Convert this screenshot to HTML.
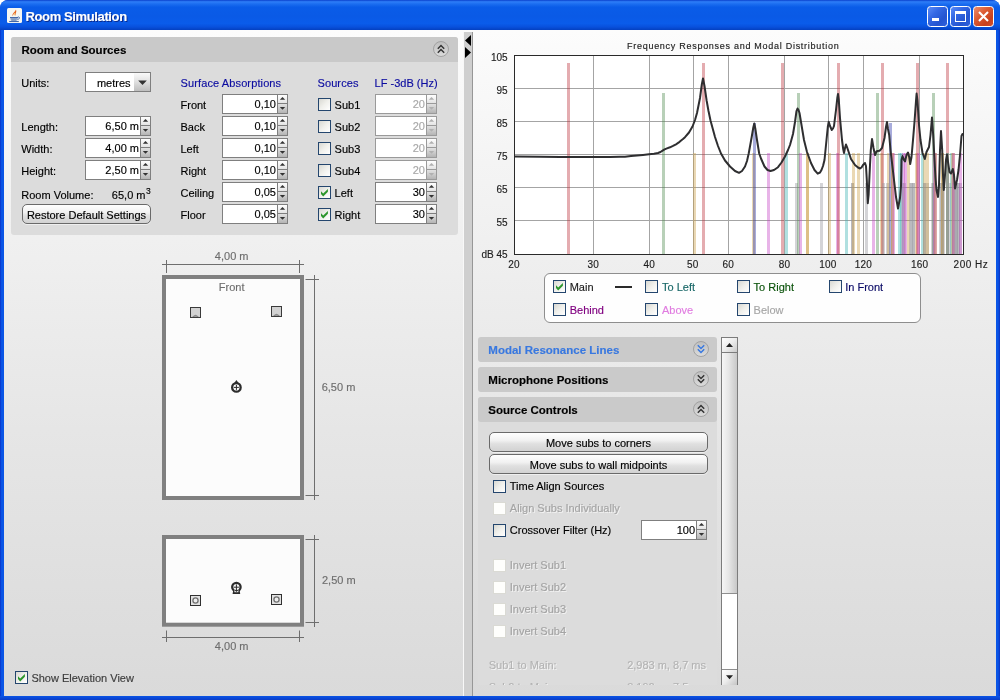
<!DOCTYPE html><html><head><meta charset="utf-8"><title>Room Simulation</title><style>
html,body{margin:0;padding:0;}body{width:1000px;height:700px;overflow:hidden;position:relative;background:#FFFFFF;font-family:"Liberation Sans", sans-serif;font-size:11px;}
div,svg{box-sizing:content-box;}div{-webkit-text-stroke:0.15px;}
</style></head><body><div style="position:absolute;left:0;top:0;width:1000px;height:700px;will-change:transform;">
<div style="position:absolute;left:0;top:0;width:1000px;height:700px;border-radius:8px 8px 0 0;overflow:hidden;background:#0A50DC;">
<div style="position:absolute;left:0;top:0;width:1000px;height:30px;background:linear-gradient(180deg,#0A40CC 0%,#2E7EF8 6%,#1C6EF0 13%,#0A5CE8 24%,#0A5AE6 55%,#0A5CEA 78%,#0850DC 90%,#0440C0 100%);"></div>
<div style="position:absolute;left:0;top:30px;width:4px;height:670px;background:linear-gradient(90deg,#0A30C8,#0A55E6 40%,#0A55E6);"></div>
<div style="position:absolute;left:996px;top:30px;width:4px;height:670px;background:linear-gradient(90deg,#0A55E6,#0A55E6 50%,#0A30C0);"></div>
<div style="position:absolute;left:0;top:696px;width:1000px;height:4px;background:linear-gradient(#0A55E6,#0A3CC8);"></div>
<div style="position:absolute;left:4px;top:30px;width:992px;height:666px;background:linear-gradient(180deg,#FCFCFC 0%,#F4F4F4 20%,#E6E6E6 60%,#DADADA 100%);"></div>
</div>
<svg style="position:absolute;left:7px;top:8px" width="15" height="15" viewBox="0 0 15 15"><rect x="0" y="0" width="15" height="15" rx="1.5" fill="#F6F6F2"/><path d="M6 8.3 C4.4 6.2 7.4 4.6 8.9 1.8 C10.2 4 7.9 5.4 8.7 7.8 C7.5 6.8 7.4 5.8 8 4.7 C6.6 5.7 5.9 6.9 6 8.3Z" fill="#E8641C"/><path d="M7 7.2 C6.8 6.2 7.6 5.4 8.2 4.4 C8 5.6 7.4 6.2 7.6 7.6Z" fill="#F8C848"/><path d="M3 9.5 H11 M3.4 10.9 H10.6 M4.2 12.1 H9.6" stroke="#4468A8" stroke-width="1" fill="none"/><path d="M2.2 13.5 H11.8" stroke="#4468A8" stroke-width="1.1" fill="none"/><path d="M10.8 9 C13.2 8.4 13.2 11.2 10.4 11.4" stroke="#4468A8" stroke-width="0.9" fill="none"/></svg>
<div style="position:absolute;top:9.40px;line-height:16px;font-size:13px;color:#fff;white-space:pre;font-weight:bold;letter-spacing:-0.38px;left:25.50px;text-shadow:1px 1px 0 #0A2A8C;">Room Simulation</div>
<div style="position:absolute;left:927px;top:6px;width:19px;height:19px;border:1px solid #fff;border-radius:3.5px;background:linear-gradient(135deg,#5C8CF8 0%,#3468E4 35%,#2454D0 70%,#3060DC 100%);"></div>
<div style="position:absolute;left:932px;top:18px;width:7px;height:3px;background:#fff;"></div>
<div style="position:absolute;left:950px;top:6px;width:19px;height:19px;border:1px solid #fff;border-radius:3.5px;background:linear-gradient(135deg,#5C8CF8 0%,#3468E4 35%,#2454D0 70%,#3060DC 100%);"></div>
<div style="position:absolute;left:955px;top:11px;width:9px;height:7px;border:1px solid #fff;border-top:3px solid #fff;"></div>
<div style="position:absolute;left:973px;top:6px;width:19px;height:19px;border:1px solid #fff;border-radius:3.5px;background:linear-gradient(135deg,#EC8E6E 0%,#DC5A32 40%,#C8401C 75%,#D25030 100%);"></div>
<svg style="position:absolute;left:973px;top:6px" width="21" height="21" viewBox="0 0 21 21"><path d="M6 6 L15 15 M15 6 L6 15" stroke="#fff" stroke-width="2.1" stroke-linecap="butt"/></svg>
<div style="position:absolute;left:11px;top:37px;width:447px;height:198px;background:#DCDCDC;border-radius:3px;"></div>
<div style="position:absolute;left:11px;top:37px;width:447px;height:25px;background:#C9C9C9;border-radius:3px 3px 0 0;"></div>
<div style="position:absolute;top:41.72px;line-height:16px;font-size:11.5px;color:#000;white-space:pre;font-weight:bold;left:21.50px;">Room and Sources</div>
<svg style="position:absolute;left:431px;top:38.8px" width="20" height="20" viewBox="-10 -10 20 20"><defs><linearGradient id="cg441_48" x1="0" y1="0" x2="0" y2="1"><stop offset="0" stop-color="#BEBEBE"/><stop offset="1" stop-color="#DCDCDC"/></linearGradient></defs><circle cx="0" cy="0" r="7.5" fill="url(#cg441_48)" stroke="#A2A2A2" stroke-width="1"/><path d="M-3.2 -0.3 L0 -3.5 L3.2 -0.3 M-3.2 3.7 L0 0.5 L3.2 3.7" fill="none" stroke="#333" stroke-width="1.5"/></svg>
<div style="position:absolute;top:75.19px;line-height:16px;font-size:11px;color:#000;white-space:pre;left:21.30px;">Units:</div>
<div style="position:absolute;left:85px;top:72px;width:64px;height:18px;border:1px solid #7F7F7F;background:#fff;"></div>
<div style="position:absolute;left:134px;top:73px;width:16px;height:18px;background:linear-gradient(#FAFAFA,#E6E6E6 40%,#BEBEBE);"></div>
<svg style="position:absolute;left:134px;top:73px" width="16" height="18" viewBox="0 0 16 18"><path d="M4.2 7.4 L12.8 7.4 L8.5 12 Z" fill="#333"/></svg>
<div style="position:absolute;top:74.59px;line-height:16px;font-size:11px;color:#000;white-space:pre;right:869.50px;">metres</div>
<div style="position:absolute;top:118.79px;line-height:16px;font-size:11px;color:#000;white-space:pre;left:21.30px;">Length:</div>
<div style="position:absolute;left:85px;top:116px;width:64px;height:18px;border:1px solid #7F7F7F;background:#fff;"></div>
<div style="position:absolute;left:140px;top:116px;width:9px;height:8px;border:1px solid #7F7F7F;background:linear-gradient(#FFFFFF,#E4E4E4);"></div>
<div style="position:absolute;left:140px;top:125px;width:9px;height:9px;border:1px solid #7F7F7F;background:linear-gradient(#E2E2E2,#B4B4B4);"></div>
<svg style="position:absolute;left:140px;top:116px" width="11" height="20" viewBox="0 0 11 20"><path d="M5.5 2.9 L8.2 5.8 L2.8 5.8 Z" fill="#333"/><path d="M2.8 12.9 L8.2 12.9 L5.5 15.8 Z" fill="#333"/></svg>
<div style="position:absolute;top:118.49px;line-height:16px;font-size:11px;color:#000;white-space:pre;right:861.00px;">6,50 m</div>
<div style="position:absolute;top:140.79px;line-height:16px;font-size:11px;color:#000;white-space:pre;left:21.30px;">Width:</div>
<div style="position:absolute;left:85px;top:138px;width:64px;height:18px;border:1px solid #7F7F7F;background:#fff;"></div>
<div style="position:absolute;left:140px;top:138px;width:9px;height:8px;border:1px solid #7F7F7F;background:linear-gradient(#FFFFFF,#E4E4E4);"></div>
<div style="position:absolute;left:140px;top:147px;width:9px;height:9px;border:1px solid #7F7F7F;background:linear-gradient(#E2E2E2,#B4B4B4);"></div>
<svg style="position:absolute;left:140px;top:138px" width="11" height="20" viewBox="0 0 11 20"><path d="M5.5 2.9 L8.2 5.8 L2.8 5.8 Z" fill="#333"/><path d="M2.8 12.9 L8.2 12.9 L5.5 15.8 Z" fill="#333"/></svg>
<div style="position:absolute;top:140.49px;line-height:16px;font-size:11px;color:#000;white-space:pre;right:861.00px;">4,00 m</div>
<div style="position:absolute;top:162.79px;line-height:16px;font-size:11px;color:#000;white-space:pre;left:21.30px;">Height:</div>
<div style="position:absolute;left:85px;top:160px;width:64px;height:18px;border:1px solid #7F7F7F;background:#fff;"></div>
<div style="position:absolute;left:140px;top:160px;width:9px;height:8px;border:1px solid #7F7F7F;background:linear-gradient(#FFFFFF,#E4E4E4);"></div>
<div style="position:absolute;left:140px;top:169px;width:9px;height:9px;border:1px solid #7F7F7F;background:linear-gradient(#E2E2E2,#B4B4B4);"></div>
<svg style="position:absolute;left:140px;top:160px" width="11" height="20" viewBox="0 0 11 20"><path d="M5.5 2.9 L8.2 5.8 L2.8 5.8 Z" fill="#333"/><path d="M2.8 12.9 L8.2 12.9 L5.5 15.8 Z" fill="#333"/></svg>
<div style="position:absolute;top:162.49px;line-height:16px;font-size:11px;color:#000;white-space:pre;right:861.00px;">2,50 m</div>
<div style="position:absolute;top:186.79px;line-height:16px;font-size:11px;color:#000;white-space:pre;left:21.30px;">Room Volume:</div>
<div style="position:absolute;top:186.79px;line-height:16px;font-size:11px;color:#000;white-space:pre;right:854.50px;">65,0 m</div>
<div style="position:absolute;top:182.55px;line-height:16px;font-size:8.5px;color:#000;white-space:pre;left:146.00px;">3</div>
<div style="position:absolute;left:22px;top:204px;width:127px;height:18px;border:1px solid #6A6A6A;border-radius:5px;background:linear-gradient(#FEFEFE 0%,#F2F2F2 40%,#E0E0E0 60%,#D2D2D2 100%);box-shadow:0 1px 0 rgba(255,255,255,.55);"></div>
<div style="position:absolute;top:206.69px;line-height:16px;font-size:11px;color:#000;white-space:pre;left:-113.50px;width:400px;text-align:center;">Restore Default Settings</div>
<div style="position:absolute;top:74.99px;line-height:16px;font-size:11px;color:#0C0CA0;white-space:pre;letter-spacing:0.12px;left:180.50px;">Surface Absorptions</div>
<div style="position:absolute;top:96.69px;line-height:16px;font-size:11px;color:#000;white-space:pre;left:180.50px;">Front</div>
<div style="position:absolute;left:222px;top:94px;width:64px;height:18px;border:1px solid #7F7F7F;background:#fff;"></div>
<div style="position:absolute;left:277px;top:94px;width:9px;height:8px;border:1px solid #7F7F7F;background:linear-gradient(#FFFFFF,#E4E4E4);"></div>
<div style="position:absolute;left:277px;top:103px;width:9px;height:9px;border:1px solid #7F7F7F;background:linear-gradient(#E2E2E2,#B4B4B4);"></div>
<svg style="position:absolute;left:277px;top:94px" width="11" height="20" viewBox="0 0 11 20"><path d="M5.5 2.9 L8.2 5.8 L2.8 5.8 Z" fill="#333"/><path d="M2.8 12.9 L8.2 12.9 L5.5 15.8 Z" fill="#333"/></svg>
<div style="position:absolute;top:96.49px;line-height:16px;font-size:11px;color:#000;white-space:pre;right:724.00px;">0,10</div>
<div style="position:absolute;top:118.69px;line-height:16px;font-size:11px;color:#000;white-space:pre;left:180.50px;">Back</div>
<div style="position:absolute;left:222px;top:116px;width:64px;height:18px;border:1px solid #7F7F7F;background:#fff;"></div>
<div style="position:absolute;left:277px;top:116px;width:9px;height:8px;border:1px solid #7F7F7F;background:linear-gradient(#FFFFFF,#E4E4E4);"></div>
<div style="position:absolute;left:277px;top:125px;width:9px;height:9px;border:1px solid #7F7F7F;background:linear-gradient(#E2E2E2,#B4B4B4);"></div>
<svg style="position:absolute;left:277px;top:116px" width="11" height="20" viewBox="0 0 11 20"><path d="M5.5 2.9 L8.2 5.8 L2.8 5.8 Z" fill="#333"/><path d="M2.8 12.9 L8.2 12.9 L5.5 15.8 Z" fill="#333"/></svg>
<div style="position:absolute;top:118.49px;line-height:16px;font-size:11px;color:#000;white-space:pre;right:724.00px;">0,10</div>
<div style="position:absolute;top:140.69px;line-height:16px;font-size:11px;color:#000;white-space:pre;left:180.50px;">Left</div>
<div style="position:absolute;left:222px;top:138px;width:64px;height:18px;border:1px solid #7F7F7F;background:#fff;"></div>
<div style="position:absolute;left:277px;top:138px;width:9px;height:8px;border:1px solid #7F7F7F;background:linear-gradient(#FFFFFF,#E4E4E4);"></div>
<div style="position:absolute;left:277px;top:147px;width:9px;height:9px;border:1px solid #7F7F7F;background:linear-gradient(#E2E2E2,#B4B4B4);"></div>
<svg style="position:absolute;left:277px;top:138px" width="11" height="20" viewBox="0 0 11 20"><path d="M5.5 2.9 L8.2 5.8 L2.8 5.8 Z" fill="#333"/><path d="M2.8 12.9 L8.2 12.9 L5.5 15.8 Z" fill="#333"/></svg>
<div style="position:absolute;top:140.49px;line-height:16px;font-size:11px;color:#000;white-space:pre;right:724.00px;">0,10</div>
<div style="position:absolute;top:162.69px;line-height:16px;font-size:11px;color:#000;white-space:pre;left:180.50px;">Right</div>
<div style="position:absolute;left:222px;top:160px;width:64px;height:18px;border:1px solid #7F7F7F;background:#fff;"></div>
<div style="position:absolute;left:277px;top:160px;width:9px;height:8px;border:1px solid #7F7F7F;background:linear-gradient(#FFFFFF,#E4E4E4);"></div>
<div style="position:absolute;left:277px;top:169px;width:9px;height:9px;border:1px solid #7F7F7F;background:linear-gradient(#E2E2E2,#B4B4B4);"></div>
<svg style="position:absolute;left:277px;top:160px" width="11" height="20" viewBox="0 0 11 20"><path d="M5.5 2.9 L8.2 5.8 L2.8 5.8 Z" fill="#333"/><path d="M2.8 12.9 L8.2 12.9 L5.5 15.8 Z" fill="#333"/></svg>
<div style="position:absolute;top:162.49px;line-height:16px;font-size:11px;color:#000;white-space:pre;right:724.00px;">0,10</div>
<div style="position:absolute;top:184.69px;line-height:16px;font-size:11px;color:#000;white-space:pre;left:180.50px;">Ceiling</div>
<div style="position:absolute;left:222px;top:182px;width:64px;height:18px;border:1px solid #7F7F7F;background:#fff;"></div>
<div style="position:absolute;left:277px;top:182px;width:9px;height:8px;border:1px solid #7F7F7F;background:linear-gradient(#FFFFFF,#E4E4E4);"></div>
<div style="position:absolute;left:277px;top:191px;width:9px;height:9px;border:1px solid #7F7F7F;background:linear-gradient(#E2E2E2,#B4B4B4);"></div>
<svg style="position:absolute;left:277px;top:182px" width="11" height="20" viewBox="0 0 11 20"><path d="M5.5 2.9 L8.2 5.8 L2.8 5.8 Z" fill="#333"/><path d="M2.8 12.9 L8.2 12.9 L5.5 15.8 Z" fill="#333"/></svg>
<div style="position:absolute;top:184.49px;line-height:16px;font-size:11px;color:#000;white-space:pre;right:724.00px;">0,05</div>
<div style="position:absolute;top:206.69px;line-height:16px;font-size:11px;color:#000;white-space:pre;left:180.50px;">Floor</div>
<div style="position:absolute;left:222px;top:204px;width:64px;height:18px;border:1px solid #7F7F7F;background:#fff;"></div>
<div style="position:absolute;left:277px;top:204px;width:9px;height:8px;border:1px solid #7F7F7F;background:linear-gradient(#FFFFFF,#E4E4E4);"></div>
<div style="position:absolute;left:277px;top:213px;width:9px;height:9px;border:1px solid #7F7F7F;background:linear-gradient(#E2E2E2,#B4B4B4);"></div>
<svg style="position:absolute;left:277px;top:204px" width="11" height="20" viewBox="0 0 11 20"><path d="M5.5 2.9 L8.2 5.8 L2.8 5.8 Z" fill="#333"/><path d="M2.8 12.9 L8.2 12.9 L5.5 15.8 Z" fill="#333"/></svg>
<div style="position:absolute;top:206.49px;line-height:16px;font-size:11px;color:#000;white-space:pre;right:724.00px;">0,05</div>
<div style="position:absolute;top:74.99px;line-height:16px;font-size:11px;color:#0C0CA0;white-space:pre;letter-spacing:0.1px;left:317.50px;">Sources</div>
<div style="position:absolute;top:74.99px;line-height:16px;font-size:11px;color:#0C0CA0;white-space:pre;left:374.60px;">LF -3dB (Hz)</div>
<div style="position:absolute;left:318px;top:98px;width:11px;height:11px;border:1px solid #24466E;background:linear-gradient(135deg,#D8D8D2 0%,#F0F0EC 50%,#FFFFFF 100%);"></div>
<div style="position:absolute;top:96.69px;line-height:16px;font-size:11px;color:#000;white-space:pre;left:334.60px;">Sub1</div>
<div style="position:absolute;left:375px;top:94px;width:60px;height:18px;border:1px solid #9A9A9A;background:#fff;"></div>
<div style="position:absolute;left:426px;top:94px;width:9px;height:8px;border:1px solid #9A9A9A;background:linear-gradient(#FFFFFF,#E4E4E4);"></div>
<div style="position:absolute;left:426px;top:103px;width:9px;height:9px;border:1px solid #9A9A9A;background:linear-gradient(#E2E2E2,#B4B4B4);"></div>
<svg style="position:absolute;left:426px;top:94px" width="11" height="20" viewBox="0 0 11 20"><path d="M5.5 2.9 L8.2 5.8 L2.8 5.8 Z" fill="#B0B0B0"/><path d="M2.8 12.9 L8.2 12.9 L5.5 15.8 Z" fill="#B0B0B0"/></svg>
<div style="position:absolute;top:96.49px;line-height:16px;font-size:11px;color:#A8A8A8;white-space:pre;right:575.00px;">20</div>
<div style="position:absolute;left:318px;top:120px;width:11px;height:11px;border:1px solid #24466E;background:linear-gradient(135deg,#D8D8D2 0%,#F0F0EC 50%,#FFFFFF 100%);"></div>
<div style="position:absolute;top:118.69px;line-height:16px;font-size:11px;color:#000;white-space:pre;left:334.60px;">Sub2</div>
<div style="position:absolute;left:375px;top:116px;width:60px;height:18px;border:1px solid #9A9A9A;background:#fff;"></div>
<div style="position:absolute;left:426px;top:116px;width:9px;height:8px;border:1px solid #9A9A9A;background:linear-gradient(#FFFFFF,#E4E4E4);"></div>
<div style="position:absolute;left:426px;top:125px;width:9px;height:9px;border:1px solid #9A9A9A;background:linear-gradient(#E2E2E2,#B4B4B4);"></div>
<svg style="position:absolute;left:426px;top:116px" width="11" height="20" viewBox="0 0 11 20"><path d="M5.5 2.9 L8.2 5.8 L2.8 5.8 Z" fill="#B0B0B0"/><path d="M2.8 12.9 L8.2 12.9 L5.5 15.8 Z" fill="#B0B0B0"/></svg>
<div style="position:absolute;top:118.49px;line-height:16px;font-size:11px;color:#A8A8A8;white-space:pre;right:575.00px;">20</div>
<div style="position:absolute;left:318px;top:142px;width:11px;height:11px;border:1px solid #24466E;background:linear-gradient(135deg,#D8D8D2 0%,#F0F0EC 50%,#FFFFFF 100%);"></div>
<div style="position:absolute;top:140.69px;line-height:16px;font-size:11px;color:#000;white-space:pre;left:334.60px;">Sub3</div>
<div style="position:absolute;left:375px;top:138px;width:60px;height:18px;border:1px solid #9A9A9A;background:#fff;"></div>
<div style="position:absolute;left:426px;top:138px;width:9px;height:8px;border:1px solid #9A9A9A;background:linear-gradient(#FFFFFF,#E4E4E4);"></div>
<div style="position:absolute;left:426px;top:147px;width:9px;height:9px;border:1px solid #9A9A9A;background:linear-gradient(#E2E2E2,#B4B4B4);"></div>
<svg style="position:absolute;left:426px;top:138px" width="11" height="20" viewBox="0 0 11 20"><path d="M5.5 2.9 L8.2 5.8 L2.8 5.8 Z" fill="#B0B0B0"/><path d="M2.8 12.9 L8.2 12.9 L5.5 15.8 Z" fill="#B0B0B0"/></svg>
<div style="position:absolute;top:140.49px;line-height:16px;font-size:11px;color:#A8A8A8;white-space:pre;right:575.00px;">20</div>
<div style="position:absolute;left:318px;top:164px;width:11px;height:11px;border:1px solid #24466E;background:linear-gradient(135deg,#D8D8D2 0%,#F0F0EC 50%,#FFFFFF 100%);"></div>
<div style="position:absolute;top:162.69px;line-height:16px;font-size:11px;color:#000;white-space:pre;left:334.60px;">Sub4</div>
<div style="position:absolute;left:375px;top:160px;width:60px;height:18px;border:1px solid #9A9A9A;background:#fff;"></div>
<div style="position:absolute;left:426px;top:160px;width:9px;height:8px;border:1px solid #9A9A9A;background:linear-gradient(#FFFFFF,#E4E4E4);"></div>
<div style="position:absolute;left:426px;top:169px;width:9px;height:9px;border:1px solid #9A9A9A;background:linear-gradient(#E2E2E2,#B4B4B4);"></div>
<svg style="position:absolute;left:426px;top:160px" width="11" height="20" viewBox="0 0 11 20"><path d="M5.5 2.9 L8.2 5.8 L2.8 5.8 Z" fill="#B0B0B0"/><path d="M2.8 12.9 L8.2 12.9 L5.5 15.8 Z" fill="#B0B0B0"/></svg>
<div style="position:absolute;top:162.49px;line-height:16px;font-size:11px;color:#A8A8A8;white-space:pre;right:575.00px;">20</div>
<div style="position:absolute;left:318px;top:186px;width:11px;height:11px;border:1px solid #24466E;background:linear-gradient(135deg,#D8D8D2 0%,#F0F0EC 50%,#FFFFFF 100%);"></div>
<svg style="position:absolute;left:318px;top:186px" width="13" height="13" viewBox="0 0 13 13"><path d="M3 5.2 L5.2 7.6 L9.9 2.9 L9.9 5.7 L5.2 10.4 L3 8 Z" fill="#2C962C"/></svg>
<div style="position:absolute;top:184.69px;line-height:16px;font-size:11px;color:#000;white-space:pre;left:334.60px;">Left</div>
<div style="position:absolute;left:375px;top:182px;width:60px;height:18px;border:1px solid #7F7F7F;background:#fff;"></div>
<div style="position:absolute;left:426px;top:182px;width:9px;height:8px;border:1px solid #7F7F7F;background:linear-gradient(#FFFFFF,#E4E4E4);"></div>
<div style="position:absolute;left:426px;top:191px;width:9px;height:9px;border:1px solid #7F7F7F;background:linear-gradient(#E2E2E2,#B4B4B4);"></div>
<svg style="position:absolute;left:426px;top:182px" width="11" height="20" viewBox="0 0 11 20"><path d="M5.5 2.9 L8.2 5.8 L2.8 5.8 Z" fill="#333"/><path d="M2.8 12.9 L8.2 12.9 L5.5 15.8 Z" fill="#333"/></svg>
<div style="position:absolute;top:184.49px;line-height:16px;font-size:11px;color:#000;white-space:pre;right:575.00px;">30</div>
<div style="position:absolute;left:318px;top:208px;width:11px;height:11px;border:1px solid #24466E;background:linear-gradient(135deg,#D8D8D2 0%,#F0F0EC 50%,#FFFFFF 100%);"></div>
<svg style="position:absolute;left:318px;top:208px" width="13" height="13" viewBox="0 0 13 13"><path d="M3 5.2 L5.2 7.6 L9.9 2.9 L9.9 5.7 L5.2 10.4 L3 8 Z" fill="#2C962C"/></svg>
<div style="position:absolute;top:206.69px;line-height:16px;font-size:11px;color:#000;white-space:pre;left:334.60px;">Right</div>
<div style="position:absolute;left:375px;top:204px;width:60px;height:18px;border:1px solid #7F7F7F;background:#fff;"></div>
<div style="position:absolute;left:426px;top:204px;width:9px;height:8px;border:1px solid #7F7F7F;background:linear-gradient(#FFFFFF,#E4E4E4);"></div>
<div style="position:absolute;left:426px;top:213px;width:9px;height:9px;border:1px solid #7F7F7F;background:linear-gradient(#E2E2E2,#B4B4B4);"></div>
<svg style="position:absolute;left:426px;top:204px" width="11" height="20" viewBox="0 0 11 20"><path d="M5.5 2.9 L8.2 5.8 L2.8 5.8 Z" fill="#333"/><path d="M2.8 12.9 L8.2 12.9 L5.5 15.8 Z" fill="#333"/></svg>
<div style="position:absolute;top:206.49px;line-height:16px;font-size:11px;color:#000;white-space:pre;right:575.00px;">30</div>
<div style="position:absolute;left:463px;top:32px;width:8px;height:664px;background:#CFCFCF;border-left:1px solid rgba(255,255,255,.85);border-right:1px solid #979797;"></div>
<svg style="position:absolute;left:464px;top:34px" width="9" height="26" viewBox="0 0 9 26"><path d="M7 1 L7 12 L1 6.5 Z M1 13 L1 24 L7 18.5 Z" fill="#000"/></svg>
<svg style="position:absolute;left:150px;top:245px" width="230" height="420" viewBox="150 245 230 420">
<rect x="164" y="277" width="138" height="221" fill="#FCFCFC" stroke="#808080" stroke-width="4"/>
<path d="M162 264.5 H304 M166.5 260 V273 M299.5 260 V273" stroke="#6E6E6E" stroke-width="1" fill="none"/>
<path d="M314.5 275 V500 M305.5 279.5 H319 M305.5 495.5 H319" stroke="#6E6E6E" stroke-width="1" fill="none"/>
<rect x="190.5" y="307.5" width="10" height="10" fill="#D2D2D2" stroke="#3A3A3A" stroke-width="1"/>
<path d="M192.5 316.8 Q195.5 313.8 198.5 316.8" fill="#8A8A8A" stroke="#6A6A6A" stroke-width="0.6"/>
<rect x="271.5" y="306.5" width="10" height="10" fill="#D2D2D2" stroke="#3A3A3A" stroke-width="1"/>
<path d="M273.5 315.8 Q276.5 312.8 279.5 315.8" fill="#8A8A8A" stroke="#6A6A6A" stroke-width="0.6"/>
<path d="M236.4 379.9 L238.9 383.4 L233.9 383.4 Z" fill="#2C2C2C"/>
<circle cx="236.4" cy="387.4" r="4.25" fill="#FAFAFA" stroke="#2C2C2C" stroke-width="2.3"/>
<path d="M236.4 384.9 V389.9 M233.9 387.4 H238.9" stroke="#2C2C2C" stroke-width="1"/>
<rect x="164" y="537" width="138" height="87.7" fill="#FCFCFC" stroke="#808080" stroke-width="4"/>
<path d="M314.5 535 V627 M305.5 539.5 H319 M305.5 622.5 H319" stroke="#6E6E6E" stroke-width="1" fill="none"/>
<path d="M162 637.5 H304 M166.5 630.5 V642 M299.5 630.5 V642" stroke="#6E6E6E" stroke-width="1" fill="none"/>
<rect x="190.5" y="595.5" width="10" height="10" fill="#E2E2E2" stroke="#303030" stroke-width="1"/>
<circle cx="195.5" cy="600.5" r="2.6" fill="#EDEDED" stroke="#707070" stroke-width="1.3"/>
<rect x="271.5" y="594.5" width="10" height="10" fill="#E2E2E2" stroke="#303030" stroke-width="1"/>
<circle cx="276.5" cy="599.5" r="2.6" fill="#EDEDED" stroke="#707070" stroke-width="1.3"/>
<path d="M232.6 594 L233.4 589 H239.4 L240.2 594 Z" fill="#2C2C2C"/>
<circle cx="236.4" cy="587" r="4.2" fill="#FAFAFA" stroke="#2C2C2C" stroke-width="2.3"/>
<rect x="234.4" y="589.6" width="4" height="2.6" fill="#FAFAFA"/>
<path d="M236.4 584.4 V591.8 M233.9 587.2 H238.9 M234.6 590.6 H238.2" stroke="#2C2C2C" stroke-width="1"/>
</svg>
<div style="position:absolute;top:247.59px;line-height:16px;font-size:11px;color:#6E6E6E;white-space:pre;left:31.70px;width:400px;text-align:center;">4,00 m</div>
<div style="position:absolute;top:279.19px;line-height:16px;font-size:11px;color:#6E6E6E;white-space:pre;left:31.70px;width:400px;text-align:center;">Front</div>
<div style="position:absolute;top:378.79px;line-height:16px;font-size:11px;color:#6E6E6E;white-space:pre;left:321.70px;">6,50 m</div>
<div style="position:absolute;top:571.79px;line-height:16px;font-size:11px;color:#6E6E6E;white-space:pre;left:322.00px;">2,50 m</div>
<div style="position:absolute;top:637.99px;line-height:16px;font-size:11px;color:#6E6E6E;white-space:pre;left:31.70px;width:400px;text-align:center;">4,00 m</div>
<div style="position:absolute;left:15px;top:671px;width:11px;height:11px;border:1px solid #24466E;background:linear-gradient(135deg,#D8D8D2 0%,#F0F0EC 50%,#FFFFFF 100%);"></div>
<svg style="position:absolute;left:15px;top:671px" width="13" height="13" viewBox="0 0 13 13"><path d="M3 5.2 L5.2 7.6 L9.9 2.9 L9.9 5.7 L5.2 10.4 L3 8 Z" fill="#2C962C"/></svg>
<div style="position:absolute;top:670.19px;line-height:16px;font-size:11px;color:#3C3C3C;white-space:pre;left:31.40px;">Show Elevation View</div>
<svg style="position:absolute;left:470px;top:30px" width="530" height="250" viewBox="470 30 530 250">
<rect x="514.5" y="55.5" width="449.0" height="199.0" fill="#FFFFFF"/>
<path d="M593.5 55.5 V254.5 M649.5 55.5 V254.5 M693.5 55.5 V254.5 M728.5 55.5 V254.5 M784.5 55.5 V254.5 M828.5 55.5 V254.5 M863.5 55.5 V254.5 M919.5 55.5 V254.5 M514.5 88.5 H963.5 M514.5 121.5 H963.5 M514.5 154.5 H963.5 M514.5 187.5 H963.5 M514.5 220.5 H963.5" stroke="#A4A4A4" stroke-width="1" fill="none"/>
<rect x="567" y="63" width="3" height="191" fill="rgba(188,48,58,0.4)"/>
<rect x="662" y="93" width="3" height="161" fill="rgba(78,138,78,0.4)"/>
<rect x="693" y="153" width="3" height="101" fill="rgba(202,157,67,0.4)"/>
<rect x="702" y="63" width="3" height="191" fill="rgba(188,48,58,0.4)"/>
<rect x="752" y="153" width="3" height="101" fill="rgba(202,157,67,0.4)"/>
<rect x="753" y="123" width="3" height="131" fill="rgba(38,48,168,0.4)"/>
<rect x="767" y="153" width="3" height="101" fill="rgba(198,68,198,0.4)"/>
<rect x="781" y="63" width="3" height="191" fill="rgba(188,48,58,0.4)"/>
<rect x="785" y="153" width="3" height="101" fill="rgba(58,178,178,0.4)"/>
<rect x="795" y="183" width="3" height="71" fill="rgba(148,148,156,0.4)"/>
<rect x="797" y="93" width="3" height="161" fill="rgba(78,138,78,0.4)"/>
<rect x="799" y="153" width="3" height="101" fill="rgba(198,68,198,0.4)"/>
<rect x="806" y="153" width="3" height="101" fill="rgba(202,157,67,0.4)"/>
<rect x="806" y="153" width="3" height="101" fill="rgba(202,157,67,0.4)"/>
<rect x="820" y="183" width="3" height="71" fill="rgba(148,148,156,0.4)"/>
<rect x="828" y="153" width="3" height="101" fill="rgba(202,157,67,0.4)"/>
<rect x="836" y="153" width="3" height="101" fill="rgba(198,68,198,0.4)"/>
<rect x="837" y="63" width="3" height="191" fill="rgba(188,48,58,0.4)"/>
<rect x="845" y="153" width="3" height="101" fill="rgba(58,178,178,0.4)"/>
<rect x="851" y="183" width="3" height="71" fill="rgba(148,148,156,0.4)"/>
<rect x="851" y="183" width="3" height="71" fill="rgba(148,148,156,0.4)"/>
<rect x="852" y="153" width="3" height="101" fill="rgba(202,157,67,0.4)"/>
<rect x="857" y="153" width="3" height="101" fill="rgba(202,157,67,0.4)"/>
<rect x="865" y="183" width="3" height="71" fill="rgba(148,148,156,0.4)"/>
<rect x="872" y="153" width="3" height="101" fill="rgba(198,68,198,0.4)"/>
<rect x="876" y="93" width="3" height="161" fill="rgba(78,138,78,0.4)"/>
<rect x="880" y="153" width="3" height="101" fill="rgba(202,157,67,0.4)"/>
<rect x="881" y="63" width="3" height="191" fill="rgba(188,48,58,0.4)"/>
<rect x="882" y="183" width="3" height="71" fill="rgba(148,148,156,0.4)"/>
<rect x="886" y="183" width="3" height="71" fill="rgba(148,148,156,0.4)"/>
<rect x="887" y="153" width="3" height="101" fill="rgba(202,157,67,0.4)"/>
<rect x="889" y="123" width="3" height="131" fill="rgba(38,48,168,0.4)"/>
<rect x="891" y="153" width="3" height="101" fill="rgba(202,157,67,0.4)"/>
<rect x="891" y="153" width="3" height="101" fill="rgba(202,157,67,0.4)"/>
<rect x="892" y="153" width="3" height="101" fill="rgba(198,68,198,0.4)"/>
<rect x="898" y="153" width="3" height="101" fill="rgba(58,178,178,0.4)"/>
<rect x="900" y="153" width="3" height="101" fill="rgba(58,178,178,0.4)"/>
<rect x="901" y="183" width="3" height="71" fill="rgba(148,148,156,0.4)"/>
<rect x="902" y="153" width="3" height="101" fill="rgba(198,68,198,0.4)"/>
<rect x="903" y="183" width="3" height="71" fill="rgba(148,148,156,0.4)"/>
<rect x="904" y="153" width="3" height="101" fill="rgba(198,68,198,0.4)"/>
<rect x="907" y="153" width="3" height="101" fill="rgba(202,157,67,0.4)"/>
<rect x="909" y="183" width="3" height="71" fill="rgba(148,148,156,0.4)"/>
<rect x="910" y="183" width="3" height="71" fill="rgba(148,148,156,0.4)"/>
<rect x="912" y="183" width="3" height="71" fill="rgba(148,148,156,0.4)"/>
<rect x="912" y="183" width="3" height="71" fill="rgba(148,148,156,0.4)"/>
<rect x="915" y="153" width="3" height="101" fill="rgba(202,157,67,0.4)"/>
<rect x="916" y="63" width="3" height="191" fill="rgba(188,48,58,0.4)"/>
<rect x="917" y="153" width="3" height="101" fill="rgba(198,68,198,0.4)"/>
<rect x="921" y="153" width="3" height="101" fill="rgba(58,178,178,0.4)"/>
<rect x="923" y="183" width="3" height="71" fill="rgba(148,148,156,0.4)"/>
<rect x="923" y="153" width="3" height="101" fill="rgba(202,157,67,0.4)"/>
<rect x="923" y="183" width="3" height="71" fill="rgba(148,148,156,0.4)"/>
<rect x="926" y="183" width="3" height="71" fill="rgba(148,148,156,0.4)"/>
<rect x="926" y="153" width="3" height="101" fill="rgba(202,157,67,0.4)"/>
<rect x="931" y="183" width="3" height="71" fill="rgba(148,148,156,0.4)"/>
<rect x="932" y="93" width="3" height="161" fill="rgba(78,138,78,0.4)"/>
<rect x="932" y="183" width="3" height="71" fill="rgba(148,148,156,0.4)"/>
<rect x="933" y="153" width="3" height="101" fill="rgba(198,68,198,0.4)"/>
<rect x="934" y="153" width="3" height="101" fill="rgba(198,68,198,0.4)"/>
<rect x="934" y="153" width="3" height="101" fill="rgba(202,157,67,0.4)"/>
<rect x="939" y="183" width="3" height="71" fill="rgba(148,148,156,0.4)"/>
<rect x="940" y="183" width="3" height="71" fill="rgba(148,148,156,0.4)"/>
<rect x="941" y="153" width="3" height="101" fill="rgba(202,157,67,0.4)"/>
<rect x="941" y="183" width="3" height="71" fill="rgba(148,148,156,0.4)"/>
<rect x="941" y="153" width="3" height="101" fill="rgba(202,157,67,0.4)"/>
<rect x="942" y="183" width="3" height="71" fill="rgba(148,148,156,0.4)"/>
<rect x="946" y="153" width="3" height="101" fill="rgba(202,157,67,0.4)"/>
<rect x="946" y="63" width="3" height="191" fill="rgba(188,48,58,0.4)"/>
<rect x="946" y="153" width="3" height="101" fill="rgba(58,178,178,0.4)"/>
<rect x="948" y="183" width="3" height="71" fill="rgba(148,148,156,0.4)"/>
<rect x="950" y="153" width="3" height="101" fill="rgba(58,178,178,0.4)"/>
<rect x="951" y="153" width="3" height="101" fill="rgba(202,157,67,0.4)"/>
<rect x="952" y="153" width="3" height="101" fill="rgba(202,157,67,0.4)"/>
<rect x="952" y="183" width="3" height="71" fill="rgba(148,148,156,0.4)"/>
<rect x="952" y="153" width="3" height="101" fill="rgba(198,68,198,0.4)"/>
<rect x="954" y="183" width="3" height="71" fill="rgba(148,148,156,0.4)"/>
<rect x="955" y="183" width="3" height="71" fill="rgba(148,148,156,0.4)"/>
<rect x="955" y="183" width="3" height="71" fill="rgba(148,148,156,0.4)"/>
<rect x="957" y="183" width="3" height="71" fill="rgba(148,148,156,0.4)"/>
<rect x="957" y="183" width="3" height="71" fill="rgba(148,148,156,0.4)"/>
<rect x="959" y="183" width="3" height="71" fill="rgba(148,148,156,0.4)"/>
<rect x="959" y="153" width="3" height="101" fill="rgba(198,68,198,0.4)"/>
<path d="M514.5 156.5 L540 156.7 L560 157 L590 157 L610 156.9 L620 156.8 L625 156.7 L631 156.1 L637 155.4 L643 154.9 L649 154.3 L654 153.7 L658 153 L660.5 152 L662.2 150.9 L664.6 149.4 L667 148.4 L670 147.3 L673 145.9 L676 144.3 L678.5 142.7 L680.8 140.7 L683 139 L685 137.2 L689 132.5 L692.5 126.5 L695 120 L697 113 L700 98 L701.8 84.5 L703 78.5 L704.5 86 L706.7 101 L708.5 111 L710.5 120.5 L715 137 L718 146 L721 153.5 L725 160.5 L730 166.5 L735 171 L739 172.8 L742 171 L745 166.5 L747 161 L748.7 153.5 L751.7 137 L753.3 127.5 L754.3 123.5 L755.3 128.5 L757 140 L759.2 153.5 L761 158.5 L764.5 166.5 L767.5 170 L770.5 171 L774 170 L778 167.2 L781.5 162.5 L785 156.5 L788 150 L790 145 L793 134 L795 122 L796.5 111 L797.5 108.5 L798.5 110 L799.5 113 L801.5 125 L804 140 L807 152 L811 163 L814.5 170 L817.7 173.7 L820 172.5 L821.5 170 L823 166 L824.5 160 L826.5 140 L827.8 127 L828.7 121.8 L830 126 L831.8 130 L833 128.5 L834 126 L836 110 L837.3 98 L838 94 L838.8 100 L840 118 L842 140 L843.2 149 L844 153 L845 148 L846 144.5 L847 147 L848 150 L851 159 L855 165 L858 167.5 L860 168.5 L861.5 167.5 L863 165 L865 163 L866 166 L866.8 180 L867.8 203.2 L868.6 195 L869.3 180 L870 165 L870.8 150 L872 139 L873.5 148 L875 155 L876.5 151.5 L877.5 151 L879.5 150.8 L882 148 L884.5 138 L886 127 L887 122 L888 129 L889.2 135 L890.5 150 L892.5 167 L894 180 L896 197 L898 208.5 L900 198 L901 186 L901.5 160 L902.5 156 L904 160 L905 161.5 L906.5 155 L908 152.5 L909.2 157 L910.2 164 L911.5 157 L913 140 L914.5 122 L916 101 L916.6 93.5 L917.4 100 L918.2 112 L919 125 L920.5 140 L922.5 153 L924.8 159 L926.5 152 L929 147 L930.5 135 L932 117.5 L933.2 135 L934.5 160 L935.5 178 L936.5 190 L938 197 L939 185 L940 150 L941 131 L942.2 150 L943 175 L943.8 190 L945 175 L946 160 L947 154.5 L948 162 L949.5 172 L951 173.5 L952.8 169 L954 175 L955 188.5 L957 180 L958.5 170 L960 155 L961.5 136 L962.5 134 L963.5 134" stroke="#2E2E30" stroke-width="2" fill="none" stroke-linejoin="round" stroke-linecap="butt"/>
<rect x="514.5" y="55.5" width="449.0" height="199.0" fill="none" stroke="#2A2A2A" stroke-width="1"/>
</svg>
<div style="position:absolute;top:37.78px;line-height:16px;font-size:9px;color:#1E1E1E;white-space:pre;letter-spacing:0.72px;left:533.20px;width:400px;text-align:center;">Frequency Responses and Modal Distribution</div>
<div style="position:absolute;top:49.64px;line-height:16px;font-size:10px;color:#1E1E1E;white-space:pre;right:492.40px;">105</div>
<div style="position:absolute;top:82.63px;line-height:16px;font-size:10px;color:#1E1E1E;white-space:pre;right:492.40px;">95</div>
<div style="position:absolute;top:115.63px;line-height:16px;font-size:10px;color:#1E1E1E;white-space:pre;right:492.40px;">85</div>
<div style="position:absolute;top:148.63px;line-height:16px;font-size:10px;color:#1E1E1E;white-space:pre;right:492.40px;">75</div>
<div style="position:absolute;top:181.63px;line-height:16px;font-size:10px;color:#1E1E1E;white-space:pre;right:492.40px;">65</div>
<div style="position:absolute;top:214.63px;line-height:16px;font-size:10px;color:#1E1E1E;white-space:pre;right:492.40px;">55</div>
<div style="position:absolute;top:246.53px;line-height:16px;font-size:10px;color:#1E1E1E;white-space:pre;right:492.40px;">dB 45</div>
<div style="position:absolute;top:256.74px;line-height:16px;font-size:10px;color:#1E1E1E;white-space:pre;letter-spacing:0.2px;left:314.10px;width:400px;text-align:center;">20</div>
<div style="position:absolute;top:256.74px;line-height:16px;font-size:10px;color:#1E1E1E;white-space:pre;letter-spacing:0.2px;left:393.16px;width:400px;text-align:center;">30</div>
<div style="position:absolute;top:256.74px;line-height:16px;font-size:10px;color:#1E1E1E;white-space:pre;letter-spacing:0.2px;left:449.26px;width:400px;text-align:center;">40</div>
<div style="position:absolute;top:256.74px;line-height:16px;font-size:10px;color:#1E1E1E;white-space:pre;letter-spacing:0.2px;left:492.78px;width:400px;text-align:center;">50</div>
<div style="position:absolute;top:256.74px;line-height:16px;font-size:10px;color:#1E1E1E;white-space:pre;letter-spacing:0.2px;left:528.33px;width:400px;text-align:center;">60</div>
<div style="position:absolute;top:256.74px;line-height:16px;font-size:10px;color:#1E1E1E;white-space:pre;letter-spacing:0.2px;left:584.42px;width:400px;text-align:center;">80</div>
<div style="position:absolute;top:256.74px;line-height:16px;font-size:10px;color:#1E1E1E;white-space:pre;letter-spacing:0.2px;left:627.94px;width:400px;text-align:center;">100</div>
<div style="position:absolute;top:256.74px;line-height:16px;font-size:10px;color:#1E1E1E;white-space:pre;letter-spacing:0.2px;left:663.49px;width:400px;text-align:center;">120</div>
<div style="position:absolute;top:256.74px;line-height:16px;font-size:10px;color:#1E1E1E;white-space:pre;letter-spacing:0.2px;left:719.59px;width:400px;text-align:center;">160</div>
<div style="position:absolute;top:256.74px;line-height:16px;font-size:10px;color:#1E1E1E;white-space:pre;letter-spacing:0.48px;left:953.60px;">200 Hz</div>
<div style="position:absolute;left:544px;top:273px;width:375px;height:48px;border:1px solid #8E8E8E;border-radius:6px;background:#FEFEFE;"></div>
<div style="position:absolute;left:553px;top:280px;width:11px;height:11px;border:1px solid #24466E;background:linear-gradient(135deg,#D8D8D2 0%,#F0F0EC 50%,#FFFFFF 100%);"></div>
<svg style="position:absolute;left:553px;top:280px" width="13" height="13" viewBox="0 0 13 13"><path d="M3 5.2 L5.2 7.6 L9.9 2.9 L9.9 5.7 L5.2 10.4 L3 8 Z" fill="#2C962C"/></svg>
<div style="position:absolute;top:278.69px;line-height:16px;font-size:11px;color:#222;white-space:pre;left:569.70px;">Main</div>
<div style="position:absolute;left:615px;top:286px;width:17px;height:2px;background:#2A2A2A;"></div>
<div style="position:absolute;left:645px;top:280px;width:11px;height:11px;border:1px solid #24466E;background:linear-gradient(135deg,#D8D8D2 0%,#F0F0EC 50%,#FFFFFF 100%);"></div>
<div style="position:absolute;top:278.69px;line-height:16px;font-size:11px;color:#1A6868;white-space:pre;left:662.00px;">To Left</div>
<div style="position:absolute;left:737px;top:280px;width:11px;height:11px;border:1px solid #24466E;background:linear-gradient(135deg,#D8D8D2 0%,#F0F0EC 50%,#FFFFFF 100%);"></div>
<div style="position:absolute;top:278.69px;line-height:16px;font-size:11px;color:#0A520A;white-space:pre;left:753.60px;">To Right</div>
<div style="position:absolute;left:829px;top:280px;width:11px;height:11px;border:1px solid #24466E;background:linear-gradient(135deg,#D8D8D2 0%,#F0F0EC 50%,#FFFFFF 100%);"></div>
<div style="position:absolute;top:278.69px;line-height:16px;font-size:11px;color:#0A0A66;white-space:pre;left:845.20px;">In Front</div>
<div style="position:absolute;left:553px;top:303px;width:11px;height:11px;border:1px solid #24466E;background:linear-gradient(135deg,#D8D8D2 0%,#F0F0EC 50%,#FFFFFF 100%);"></div>
<div style="position:absolute;top:301.69px;line-height:16px;font-size:11px;color:#800080;white-space:pre;left:569.70px;">Behind</div>
<div style="position:absolute;left:645px;top:303px;width:11px;height:11px;border:1px solid #24466E;background:linear-gradient(135deg,#D8D8D2 0%,#F0F0EC 50%,#FFFFFF 100%);"></div>
<div style="position:absolute;top:301.69px;line-height:16px;font-size:11px;color:#E07CE0;white-space:pre;left:662.00px;">Above</div>
<div style="position:absolute;left:737px;top:303px;width:11px;height:11px;border:1px solid #24466E;background:linear-gradient(135deg,#D8D8D2 0%,#F0F0EC 50%,#FFFFFF 100%);"></div>
<div style="position:absolute;top:301.69px;line-height:16px;font-size:11px;color:#A6A6A6;white-space:pre;left:753.60px;">Below</div>
<div style="position:absolute;left:478px;top:337px;width:239px;height:24.5px;background:#CACACA;border-radius:3px;"></div>
<div style="position:absolute;top:341.92px;line-height:16px;font-size:11.5px;color:#3878E0;white-space:pre;font-weight:bold;left:488.30px;">Modal Resonance Lines</div>
<svg style="position:absolute;left:691px;top:339px" width="20" height="20" viewBox="-10 -10 20 20"><defs><linearGradient id="cg701_349" x1="0" y1="0" x2="0" y2="1"><stop offset="0" stop-color="#BEBEBE"/><stop offset="1" stop-color="#DCDCDC"/></linearGradient></defs><circle cx="0" cy="0" r="7.5" fill="url(#cg701_349)" stroke="#A2A2A2" stroke-width="1"/><path d="M-3.2 -3.7 L0 -0.5 L3.2 -3.7 M-3.2 0.3 L0 3.5 L3.2 0.3" fill="none" stroke="#3878E0" stroke-width="1.5"/></svg>
<div style="position:absolute;left:478px;top:367px;width:239px;height:24.5px;background:#CACACA;border-radius:3px;"></div>
<div style="position:absolute;top:371.92px;line-height:16px;font-size:11.5px;color:#000;white-space:pre;font-weight:bold;left:488.30px;">Microphone Positions</div>
<svg style="position:absolute;left:691px;top:369px" width="20" height="20" viewBox="-10 -10 20 20"><defs><linearGradient id="cg701_379" x1="0" y1="0" x2="0" y2="1"><stop offset="0" stop-color="#BEBEBE"/><stop offset="1" stop-color="#DCDCDC"/></linearGradient></defs><circle cx="0" cy="0" r="7.5" fill="url(#cg701_379)" stroke="#A2A2A2" stroke-width="1"/><path d="M-3.2 -3.7 L0 -0.5 L3.2 -3.7 M-3.2 0.3 L0 3.5 L3.2 0.3" fill="none" stroke="#333" stroke-width="1.5"/></svg>
<div style="position:absolute;left:478px;top:397px;width:239px;height:288px;background:#DCDCDC;border-radius:3px 3px 0 0;"></div>
<div style="position:absolute;left:478px;top:397px;width:239px;height:24.5px;background:#CACACA;border-radius:3px;"></div>
<div style="position:absolute;top:401.92px;line-height:16px;font-size:11.5px;color:#000;white-space:pre;font-weight:bold;left:488.30px;">Source Controls</div>
<svg style="position:absolute;left:691px;top:399px" width="20" height="20" viewBox="-10 -10 20 20"><defs><linearGradient id="cg701_409" x1="0" y1="0" x2="0" y2="1"><stop offset="0" stop-color="#BEBEBE"/><stop offset="1" stop-color="#DCDCDC"/></linearGradient></defs><circle cx="0" cy="0" r="7.5" fill="url(#cg701_409)" stroke="#A2A2A2" stroke-width="1"/><path d="M-3.2 -0.3 L0 -3.5 L3.2 -0.3 M-3.2 3.7 L0 0.5 L3.2 3.7" fill="none" stroke="#333" stroke-width="1.5"/></svg>
<div style="position:absolute;left:489px;top:432px;width:217px;height:18px;border:1px solid #6A6A6A;border-radius:5px;background:linear-gradient(#FEFEFE 0%,#F2F2F2 40%,#E0E0E0 60%,#D2D2D2 100%);box-shadow:0 1px 0 rgba(255,255,255,.55);"></div>
<div style="position:absolute;top:434.69px;line-height:16px;font-size:11px;color:#000;white-space:pre;left:398.50px;width:400px;text-align:center;">Move subs to corners</div>
<div style="position:absolute;left:489px;top:454px;width:217px;height:18px;border:1px solid #6A6A6A;border-radius:5px;background:linear-gradient(#FEFEFE 0%,#F2F2F2 40%,#E0E0E0 60%,#D2D2D2 100%);box-shadow:0 1px 0 rgba(255,255,255,.55);"></div>
<div style="position:absolute;top:456.69px;line-height:16px;font-size:11px;color:#000;white-space:pre;left:398.50px;width:400px;text-align:center;">Move subs to wall midpoints</div>
<div style="position:absolute;left:493px;top:480px;width:11px;height:11px;border:1px solid #24466E;background:linear-gradient(135deg,#D8D8D2 0%,#F0F0EC 50%,#FFFFFF 100%);"></div>
<div style="position:absolute;top:478.39px;line-height:16px;font-size:11px;color:#000;white-space:pre;left:509.80px;">Time Align Sources</div>
<div style="position:absolute;left:493px;top:502px;width:11px;height:11px;border:1px solid #DADAD4;background:#FEFEFC;"></div>
<div style="position:absolute;top:500.39px;line-height:16px;font-size:11px;color:#A4A4A4;white-space:pre;left:509.80px;text-shadow:1px 1px 0 #F4F4F4;">Align Subs Individually</div>
<div style="position:absolute;left:493px;top:524px;width:11px;height:11px;border:1px solid #24466E;background:linear-gradient(135deg,#D8D8D2 0%,#F0F0EC 50%,#FFFFFF 100%);"></div>
<div style="position:absolute;top:522.39px;line-height:16px;font-size:11px;color:#000;white-space:pre;left:509.80px;">Crossover Filter (Hz)</div>
<div style="position:absolute;left:641px;top:520px;width:64px;height:18px;border:1px solid #7F7F7F;background:#fff;"></div>
<div style="position:absolute;left:696px;top:520px;width:9px;height:8px;border:1px solid #7F7F7F;background:linear-gradient(#FFFFFF,#E4E4E4);"></div>
<div style="position:absolute;left:696px;top:529px;width:9px;height:9px;border:1px solid #7F7F7F;background:linear-gradient(#E2E2E2,#B4B4B4);"></div>
<svg style="position:absolute;left:696px;top:520px" width="11" height="20" viewBox="0 0 11 20"><path d="M5.5 2.9 L8.2 5.8 L2.8 5.8 Z" fill="#333"/><path d="M2.8 12.9 L8.2 12.9 L5.5 15.8 Z" fill="#333"/></svg>
<div style="position:absolute;top:522.49px;line-height:16px;font-size:11px;color:#000;white-space:pre;right:305.00px;">100</div>
<div style="position:absolute;left:493px;top:559px;width:11px;height:11px;border:1px solid #DADAD4;background:#FEFEFC;"></div>
<div style="position:absolute;top:557.39px;line-height:16px;font-size:11px;color:#A4A4A4;white-space:pre;left:509.80px;text-shadow:1px 1px 0 #F4F4F4;">Invert Sub1</div>
<div style="position:absolute;left:493px;top:581px;width:11px;height:11px;border:1px solid #DADAD4;background:#FEFEFC;"></div>
<div style="position:absolute;top:579.39px;line-height:16px;font-size:11px;color:#A4A4A4;white-space:pre;left:509.80px;text-shadow:1px 1px 0 #F4F4F4;">Invert Sub2</div>
<div style="position:absolute;left:493px;top:603px;width:11px;height:11px;border:1px solid #DADAD4;background:#FEFEFC;"></div>
<div style="position:absolute;top:601.39px;line-height:16px;font-size:11px;color:#A4A4A4;white-space:pre;left:509.80px;text-shadow:1px 1px 0 #F4F4F4;">Invert Sub3</div>
<div style="position:absolute;left:493px;top:625px;width:11px;height:11px;border:1px solid #DADAD4;background:#FEFEFC;"></div>
<div style="position:absolute;top:623.39px;line-height:16px;font-size:11px;color:#A4A4A4;white-space:pre;left:509.80px;text-shadow:1px 1px 0 #F4F4F4;">Invert Sub4</div>
<div style="position:absolute;top:656.99px;line-height:16px;font-size:11px;color:#B4B4B4;white-space:pre;left:488.70px;text-shadow:1px 1px 0 #F6F6F6;">Sub1 to Main:</div>
<div style="position:absolute;top:656.99px;line-height:16px;font-size:11px;color:#B4B4B4;white-space:pre;right:294.00px;text-shadow:1px 1px 0 #F6F6F6;">2,983 m, 8,7 ms</div>
<div style="position:absolute;left:479px;top:676px;width:239px;height:9px;overflow:hidden;">
<div style="position:absolute;left:9.7px;top:3px;font-size:11px;line-height:16px;color:#B4B4B4;text-shadow:1px 1px 0 #F6F6F6;white-space:pre;">Sub2 to Main:</div>
<div style="position:absolute;right:12px;top:3px;font-size:11px;line-height:16px;color:#B4B4B4;text-shadow:1px 1px 0 #F6F6F6;white-space:pre;">3,192 m, 7,5 ms</div>
</div>
<div style="position:absolute;left:721px;top:337px;width:15px;height:346px;border:1px solid #7C7C7C;background:#FFFFFF;"></div>
<div style="position:absolute;left:722px;top:353px;width:15px;height:240px;background:linear-gradient(90deg,#F6F6F6,#E6E6E6 45%,#C8C8C8);border-bottom:1px solid #8E8E8E;"></div>
<div style="position:absolute;left:722px;top:338px;width:15px;height:14px;background:linear-gradient(135deg,#FFFFFF,#ECECEC 50%,#CACACA);border-bottom:1px solid #7C7C7C;"></div>
<div style="position:absolute;left:722px;top:669px;width:15px;height:15px;background:linear-gradient(135deg,#FFFFFF,#ECECEC 50%,#C4C4C4);border-top:1px solid #8E8E8E;"></div>
<svg style="position:absolute;left:722px;top:338px" width="15" height="14" viewBox="0 0 15 14"><path d="M4 9 L11 9 L7.5 4.9 Z" fill="#222"/></svg>
<svg style="position:absolute;left:722px;top:670px" width="15" height="15" viewBox="0 0 15 15"><path d="M4 5.2 L11 5.2 L7.5 9.2 Z" fill="#222"/></svg>
</div></body></html>
